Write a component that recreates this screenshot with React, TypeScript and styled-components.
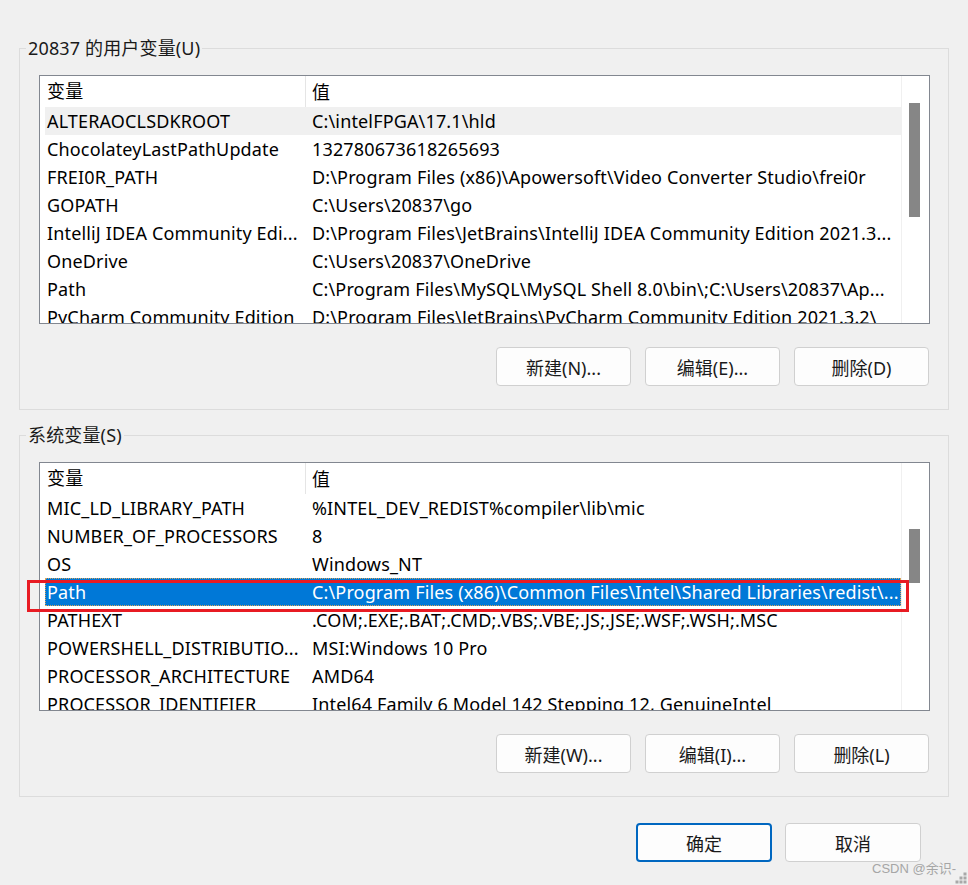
import React from 'react';
import styled, { createGlobalStyle } from 'styled-components';

type Row = { name: string; value: string };

const HEADER_H = 31;
const ROW_H = 28;

const userVars: Row[] = [
  { name: 'ALTERAOCLSDKROOT', value: 'C:\\intelFPGA\\17.1\\hld' },
  { name: 'ChocolateyLastPathUpdate', value: '132780673618265693' },
  { name: 'FREI0R_PATH', value: 'D:\\Program Files (x86)\\Apowersoft\\Video Converter Studio\\frei0r' },
  { name: 'GOPATH', value: 'C:\\Users\\20837\\go' },
  { name: 'IntelliJ IDEA Community Edi...', value: 'D:\\Program Files\\JetBrains\\IntelliJ IDEA Community Edition 2021.3...' },
  { name: 'OneDrive', value: 'C:\\Users\\20837\\OneDrive' },
  { name: 'Path', value: 'C:\\Program Files\\MySQL\\MySQL Shell 8.0\\bin\\;C:\\Users\\20837\\Ap...' },
  { name: 'PyCharm Community Edition', value: 'D:\\Program Files\\JetBrains\\PyCharm Community Edition 2021.3.2\\' },
];

const systemVars: Row[] = [
  { name: 'MIC_LD_LIBRARY_PATH', value: '%INTEL_DEV_REDIST%compiler\\lib\\mic' },
  { name: 'NUMBER_OF_PROCESSORS', value: '8' },
  { name: 'OS', value: 'Windows_NT' },
  { name: 'Path', value: 'C:\\Program Files (x86)\\Common Files\\Intel\\Shared Libraries\\redist\\...' },
  { name: 'PATHEXT', value: '.COM;.EXE;.BAT;.CMD;.VBS;.VBE;.JS;.JSE;.WSF;.WSH;.MSC' },
  { name: 'POWERSHELL_DISTRIBUTIO...', value: 'MSI:Windows 10 Pro' },
  { name: 'PROCESSOR_ARCHITECTURE', value: 'AMD64' },
  { name: 'PROCESSOR_IDENTIFIER', value: 'Intel64 Family 6 Model 142 Stepping 12, GenuineIntel' },
];

const VarList = ({
  rows,
  hover,
  selected,
  thumbTop,
  thumbHeight,
}: {
  rows: Row[];
  hover?: number;
  selected?: number;
  thumbTop: number;
  thumbHeight: number;
}) => (
  <ListBox>
    <Columns>
      <Header>
        <NameCell $head>变量</NameCell>
        <ValueCell>值</ValueCell>
      </Header>
      {rows.map((r, i) => (
        <ListRow key={r.name} $hover={i === hover} $selected={i === selected}>
          <NameCell>{r.name}</NameCell>
          <ValueCell>{r.value}</ValueCell>
        </ListRow>
      ))}
    </Columns>
    <ScrollBar>
      <Thumb style={{ top: thumbTop, height: thumbHeight }} />
    </ScrollBar>
    {selected !== undefined && <RedMark style={{ top: HEADER_H + selected * ROW_H + 2 }} />}
  </ListBox>
);

const App = () => {
  return (
    <Dialog>
      <GlobalStyle />
      <Group>
        <legend>20837 的用户变量(U)</legend>
        <VarList rows={userVars} hover={0} thumbTop={27} thumbHeight={114} />
        <ButtonRow>
          <Button>新建(N)...</Button>
          <Button>编辑(E)...</Button>
          <Button>删除(D)</Button>
        </ButtonRow>
      </Group>
      <Group $second>
        <legend>系统变量(S)</legend>
        <VarList rows={systemVars} selected={3} thumbTop={66} thumbHeight={54} />
        <ButtonRow>
          <Button>新建(W)...</Button>
          <Button>编辑(I)...</Button>
          <Button>删除(L)</Button>
        </ButtonRow>
      </Group>
      <Footer>
        <Button $primary>确定</Button>
        <Button>取消</Button>
      </Footer>
      <Watermark>CSDN @余识-</Watermark>
      <Grip width="14" height="14" viewBox="0 0 14 14">
        {[
          [11, 3],
          [7, 7],
          [11, 7],
          [3, 11],
          [7, 11],
          [11, 11],
        ].map(([x, y]) => (
          <rect key={`${x}-${y}`} x={x - 1.5} y={y - 1.5} width="3" height="3" fill="#a8a8a8" />
        ))}
      </Grip>
    </Dialog>
  );
};

export default App;

const GlobalStyle = createGlobalStyle`
  html, body {
    margin: 0;
    padding: 0;
    background: #f0f0f0;
  }
  body {
    font-family: "Noto Sans", "Noto Sans CJK SC", sans-serif;
    color: #000;
  }
`;

const Dialog = styled.div`
  position: relative;
  width: 968px;
  height: 885px;
  box-sizing: border-box;
  padding: 0 19px;
  overflow: hidden;
  font-size: 18px;
  letter-spacing: 0.15px;
`;

const Group = styled.fieldset<{ $second?: boolean }>`
  margin: ${(p) => (p.$second ? '13px' : '36px')} 0 0 0;
  padding: 15px 18px 23px 19px;
  border: 1px solid #dcdcdc;
  min-width: 0;
  legend {
    margin-left: -13px;
    padding: 0 2px;
    height: 24px;
    line-height: 24px;
    font-size: 18px;
    color: #1a1a1a;
  }
`;

const ListBox = styled.div`
  position: relative;
  display: flex;
  height: 249px;
  box-sizing: border-box;
  border: 1px solid #828790;
  background: #fff;
`;

const Columns = styled.div`
  flex: 1;
  min-width: 0;
  overflow: hidden;
`;

const Header = styled.div`
  display: grid;
  grid-template-columns: 266px 1fr;
  height: ${HEADER_H}px;
  align-items: center;
`;

const ListRow = styled.div<{ $hover?: boolean; $selected?: boolean }>`
  position: relative;
  display: grid;
  grid-template-columns: 266px 1fr;
  height: ${ROW_H}px;
  align-items: center;
  color: ${(p) => (p.$selected ? '#fff' : '#000')};
  &::before {
    content: '';
    position: absolute;
    left: 5px;
    right: 0;
    top: 0;
    bottom: 0;
    background: ${(p) => (p.$selected ? '#0078d7' : p.$hover ? '#f0f0f0' : 'transparent')};
    outline: ${(p) => (p.$selected ? '1px dotted #d9a35a' : 'none')};
    outline-offset: -1px;
  }
`;

const NameCell = styled.div<{ $head?: boolean }>`
  position: relative;
  height: 100%;
  padding: 0 1px 0 7px;
  border-right: 1px solid ${(p) => (p.$head ? '#e5e5e5' : 'transparent')};
  overflow: hidden;
  white-space: nowrap;
  text-overflow: ellipsis;
  line-height: ${(p) => (p.$head ? HEADER_H : ROW_H)}px;
  box-sizing: border-box;
`;

const ValueCell = styled.div`
  position: relative;
  padding: 0 0 0 6px;
  overflow: hidden;
  white-space: nowrap;
  text-overflow: ellipsis;
  line-height: ${ROW_H}px;
`;

const RedMark = styled.div`
  position: absolute;
  left: -13px;
  right: 20px;
  height: 32px;
  box-sizing: border-box;
  border: 3px solid #e81b23;
  pointer-events: none;
`;

const ScrollBar = styled.div`
  position: relative;
  width: 27px;
  border-left: 1px solid #f0f0f0;
  background: #fff;
`;

const Thumb = styled.div`
  position: absolute;
  left: 7px;
  width: 11px;
  background: #868686;
`;

const ButtonRow = styled.div`
  display: flex;
  justify-content: flex-end;
  gap: 14px;
  margin-top: 23px;
  padding-right: 1px;
`;

const Button = styled.button<{ $primary?: boolean }>`
  width: 135px;
  height: 39px;
  box-sizing: border-box;
  border: ${(p) => (p.$primary ? '2px solid #0067c0' : '1px solid #d0d0d0')};
  border-radius: 4px;
  background: #fdfdfd;
  font-family: "Noto Sans", "Noto Sans CJK SC", sans-serif;
  font-size: 18px;
  color: #1a1a1a;
  padding: 0;
`;

const Footer = styled.div`
  display: flex;
  justify-content: flex-end;
  gap: 13px;
  margin-top: 26px;
  padding-right: 28px;
  ${Button} {
    width: 136px;
  }
`;

const Watermark = styled.div`
  position: absolute;
  right: 12px;
  bottom: 8px;
  font-family: "Liberation Sans", "Noto Sans CJK SC", sans-serif;
  font-size: 13px;
  letter-spacing: 0;
  color: #a6a6a6;
`;

const Grip = styled.svg`
  position: absolute;
  right: 0;
  bottom: 0;
`;
